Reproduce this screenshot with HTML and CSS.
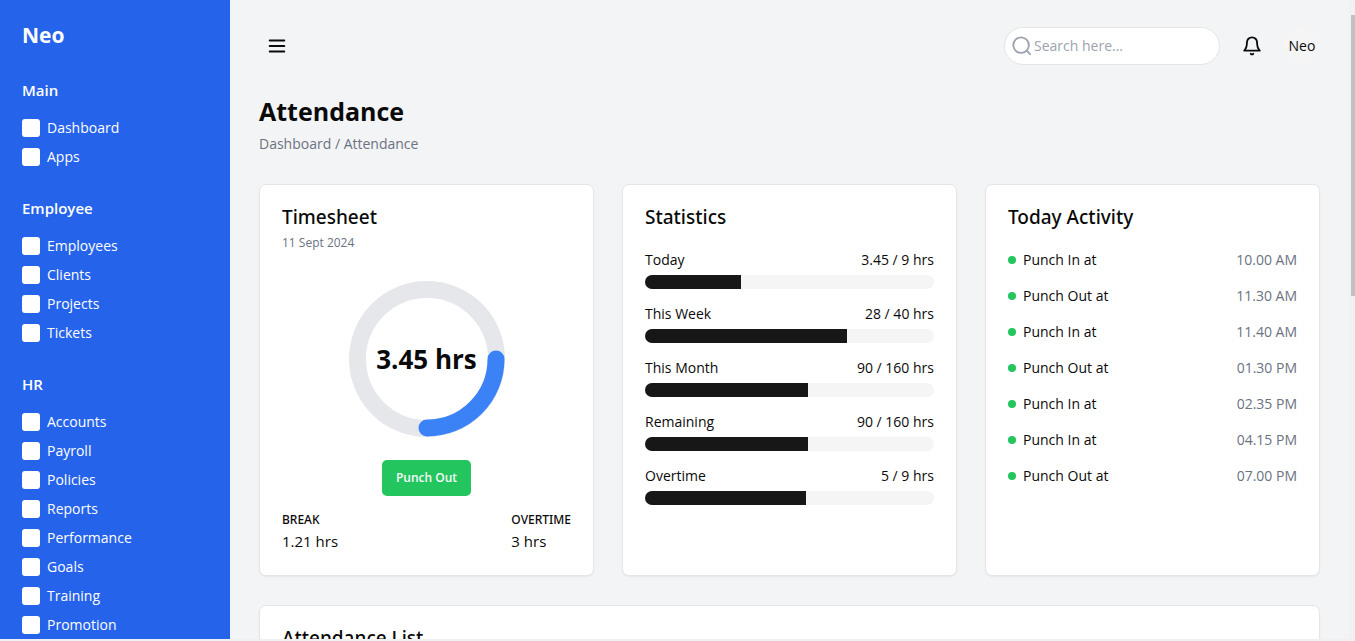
FILE: index.html
```html
<!DOCTYPE html>
<html lang="en">
<head>
<meta charset="utf-8">
<meta name="viewport" content="width=device-width, initial-scale=1">
<title>Attendance</title>
<link rel="stylesheet" href="styles.css">
</head>
<body>
<div class="shell">
  <aside class="sidebar">
    <a class="brand" href="#">Neo</a>
    <nav class="nav" aria-label="Primary">
      <section class="nav-group">
        <h2 class="nav-title">Main</h2>
        <a class="nav-link" href="#"><span class="nav-icon"></span>Dashboard</a>
        <a class="nav-link" href="#"><span class="nav-icon"></span>Apps</a>
      </section>
      <section class="nav-group">
        <h2 class="nav-title">Employee</h2>
        <a class="nav-link" href="#"><span class="nav-icon"></span>Employees</a>
        <a class="nav-link" href="#"><span class="nav-icon"></span>Clients</a>
        <a class="nav-link" href="#"><span class="nav-icon"></span>Projects</a>
        <a class="nav-link" href="#"><span class="nav-icon"></span>Tickets</a>
      </section>
      <section class="nav-group">
        <h2 class="nav-title">HR</h2>
        <a class="nav-link" href="#"><span class="nav-icon"></span>Accounts</a>
        <a class="nav-link" href="#"><span class="nav-icon"></span>Payroll</a>
        <a class="nav-link" href="#"><span class="nav-icon"></span>Policies</a>
        <a class="nav-link" href="#"><span class="nav-icon"></span>Reports</a>
        <a class="nav-link" href="#"><span class="nav-icon"></span>Performance</a>
        <a class="nav-link" href="#"><span class="nav-icon"></span>Goals</a>
        <a class="nav-link" href="#"><span class="nav-icon"></span>Training</a>
        <a class="nav-link" href="#"><span class="nav-icon"></span>Promotion</a>
      </section>
    </nav>
  </aside>

  <main class="main">
    <header class="topbar">
      <button class="icon-button" type="button" aria-label="Toggle menu">
        <svg width="22" height="22" viewBox="0 0 24 24" fill="none" stroke="currentColor" stroke-width="2" stroke-linecap="round"><path d="M4 6h16M4 12h16M4 18h16"/></svg>
      </button>
      <div class="topbar-actions">
        <label class="search">
          <svg width="22" height="22" viewBox="0 0 24 24" fill="none" stroke="currentColor" stroke-width="2" stroke-linecap="round"><circle cx="11" cy="11" r="8.5"/><path d="m17.2 17.2 3.600 3.600"/></svg>
          <input class="search-input" type="search" placeholder="Search here..." aria-label="Search">
        </label>
        <button class="icon-button bell" type="button" aria-label="Notifications">
          <svg width="22" height="22" viewBox="0 0 24 24" fill="none" stroke="currentColor" stroke-width="2" stroke-linecap="round" stroke-linejoin="round"><path d="M6.500 8a5.500 5.500 0 0 1 11 0c0 5 .8 7 3 9h-17c2.200-2 3-4 3-9"/><path d="M10.700 20.500a1.700 1.700 0 0 0 2.600 0"/></svg>
        </button>
        <button class="avatar" type="button">Neo</button>
      </div>
    </header>

    <div class="heading">
      <h1 class="page-title">Attendance</h1>
      <p class="crumbs">Dashboard / Attendance</p>
    </div>

    <div class="cards">
      <section class="card timesheet">
        <h2 class="card-title">Timesheet</h2>
        <p class="date">11 Sept 2024</p>
        <div class="ring">
          <svg class="ring-chart" width="156" height="156" viewBox="0 0 156 156" fill="none" stroke-width="17" aria-hidden="true"><circle cx="78" cy="78" r="69.5" stroke="#e5e7eb"/><path d="M147 78A69 69 0 0 1 78 147" stroke="#3b82f6" stroke-linecap="round"/></svg>
          <strong class="ring-value">3.45 hrs</strong>
        </div>
        <button class="punch" type="button">Punch Out</button>
        <dl class="totals">
          <div><dt>BREAK</dt><dd>1.21 hrs</dd></div>
          <div><dt>OVERTIME</dt><dd>3 hrs</dd></div>
        </dl>
      </section>

      <section class="card">
        <h2 class="card-title">Statistics</h2>
        <div class="rows">
          <div class="stat"><div class="row"><span>Today</span><span>3.45 / 9 hrs</span></div><div class="bar"><div class="fill" style="width:33.3%"></div></div></div>
          <div class="stat"><div class="row"><span>This Week</span><span>28 / 40 hrs</span></div><div class="bar"><div class="fill" style="width:70%"></div></div></div>
          <div class="stat"><div class="row"><span>This Month</span><span>90 / 160 hrs</span></div><div class="bar"><div class="fill" style="width:56.25%"></div></div></div>
          <div class="stat"><div class="row"><span>Remaining</span><span>90 / 160 hrs</span></div><div class="bar"><div class="fill" style="width:56.25%"></div></div></div>
          <div class="stat"><div class="row"><span>Overtime</span><span>5 / 9 hrs</span></div><div class="bar"><div class="fill" style="width:55.6%"></div></div></div>
        </div>
      </section>

      <section class="card">
        <h2 class="card-title">Today Activity</h2>
        <ul class="rows">
          <li class="row"><span class="event">Punch In at</span><time>10.00 AM</time></li>
          <li class="row"><span class="event">Punch Out at</span><time>11.30 AM</time></li>
          <li class="row"><span class="event">Punch In at</span><time>11.40 AM</time></li>
          <li class="row"><span class="event">Punch Out at</span><time>01.30 PM</time></li>
          <li class="row"><span class="event">Punch In at</span><time>02.35 PM</time></li>
          <li class="row"><span class="event">Punch In at</span><time>04.15 PM</time></li>
          <li class="row"><span class="event">Punch Out at</span><time>07.00 PM</time></li>
        </ul>
      </section>
    </div>

    <section class="card list-card">
      <h2 class="card-title">Attendance List</h2>
    </section>
  </main>
  <div class="scroll-track" aria-hidden="true"><div class="scroll-thumb"></div></div>
</div>
<div class="window-edge"></div>
</body>
</html>
```
FILE: styles.css
```css
* { box-sizing: border-box; }

body {
  margin: 0;
  height: 100vh;
  display: flex;
  flex-direction: column;
  overflow: hidden;
  background: #f3f4f6;
  color: #0a0a0a;
  font: 14px/22px "Open Sans", "Noto Sans", sans-serif;
}

h1, h2, p, ul, dl, dd { margin: 0; padding: 0; }
ul { list-style: none; }
a { color: inherit; text-decoration: none; }
button, input { font: inherit; color: inherit; border: 0; padding: 0; background: none; }
svg { display: block; flex: none; }

.shell { flex: 1; min-height: 0; display: flex; }
.window-edge { height: 2px; background: #f0f0f0; }

.sidebar {
  width: 230px;
  flex: none;
  overflow: hidden;
  padding: 22px;
  background: #2563eb;
  color: #fff;
}
.brand { display: block; font-size: 21px; line-height: 26px; font-weight: 700; }
.nav { display: flex; flex-direction: column; gap: 29px; margin-top: 31px; }
.nav-title { margin-bottom: 16px; font-size: 15px; line-height: 22px; font-weight: 600; }
.nav-link { display: flex; align-items: center; gap: 7px; height: 22px; margin-bottom: 7px; }
.nav-link:last-child { margin-bottom: 0; }
.nav-icon { width: 18px; height: 18px; border-radius: 3px; background: #fff; }

.main { flex: 1; min-width: 0; overflow: hidden; padding: 27px 29px 0; }
.topbar, .topbar-actions { display: flex; align-items: center; }
.topbar { justify-content: space-between; }
.topbar-actions { gap: 14px; }
.icon-button { width: 36px; height: 36px; display: grid; place-items: center; }
.search {
  width: 216px;
  height: 38px;
  display: flex;
  align-items: center;
  gap: 1px;
  padding: 0 7px 0 6px;
  border: 1px solid #e5e5e5;
  border-radius: 19px;
  background: #fff;
  color: #9ca3af;
}
.search-input { flex: 1; min-width: 0; outline: 0; }
.search-input::placeholder { color: #9ca3af; opacity: 1; }
.avatar { width: 36px; height: 36px; border-radius: 50%; background: #f5f5f5; }

.heading { margin-top: 29px; }
.page-title { font-size: 25px; line-height: 34px; font-weight: 700; }
.crumbs { margin-top: 5px; color: #6b7280; }

.cards { display: grid; grid-template-columns: repeat(3, 1fr); gap: 28px; margin-top: 29px; }
.card {
  padding: 22px;
  border: 1px solid #e5e5e5;
  border-radius: 7px;
  background: #fff;
  box-shadow: 0 1px 2px rgb(0 0 0 / 5%);
}
.card-title { font-family: "Noto Sans", sans-serif; font-size: 19px; line-height: 20px; font-weight: 500; }
.timesheet { display: flex; flex-direction: column; }
.date { margin-top: 6px; font-size: 12px; line-height: 20px; color: #6b7280; }
.ring { display: grid; place-items: center; margin-top: 28px; }
.ring-chart, .ring-value { grid-area: 1 / 1; }
.ring-value { font-size: 26px; line-height: 36px; }
.punch {
  align-self: center;
  height: 36px;
  margin-top: 23px;
  padding: 0 14px;
  border-radius: 5px;
  background: #22c55e;
  color: #fafafa;
  font-size: 12px;
  font-weight: 600;
}
.totals { display: flex; justify-content: space-between; margin-top: 14px; }
.totals dt { font-family: "Noto Sans", sans-serif; font-size: 12px; line-height: 20px; font-weight: 500; }
.totals dd { font-size: 15px; line-height: 23px; }

.rows { display: flex; flex-direction: column; gap: 14px; margin-top: 22px; }
.row { display: flex; justify-content: space-between; }
.bar { height: 14px; margin-top: 4px; overflow: hidden; border-radius: 7px; background: #f5f5f5; }
.fill { height: 100%; background: #171717; }
.event { display: flex; align-items: center; gap: 7px; }
.event::before { content: ""; width: 8px; height: 8px; border-radius: 50%; background: #22c55e; }
.row time { color: #6b7280; }

.list-card { margin-top: 29px; min-height: 200px; }

.scroll-track { width: 6px; flex: none; padding: 15px 0 0 2px; background: #f1f1f1; }
.scroll-thumb { height: 45%; background: #c1c1c1; }
```
